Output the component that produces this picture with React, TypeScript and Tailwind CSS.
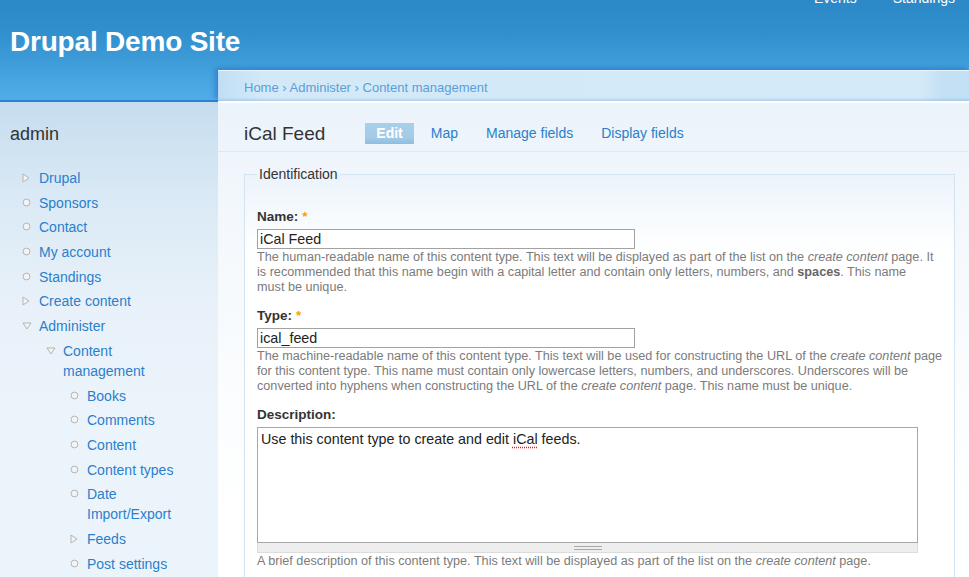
import React from "react";

type MenuItem = {
  label: string;
  kind: "leaf" | "collapsed" | "expanded";
  children?: MenuItem[];
};

const menu: MenuItem[] = [
  { label: "Drupal", kind: "collapsed" },
  { label: "Sponsors", kind: "leaf" },
  { label: "Contact", kind: "leaf" },
  { label: "My account", kind: "leaf" },
  { label: "Standings", kind: "leaf" },
  { label: "Create content", kind: "collapsed" },
  {
    label: "Administer",
    kind: "expanded",
    children: [
      {
        label: "Content management",
        kind: "expanded",
        children: [
          { label: "Books", kind: "leaf" },
          { label: "Comments", kind: "leaf" },
          { label: "Content", kind: "leaf" },
          { label: "Content types", kind: "leaf" },
          { label: "Date Import/Export", kind: "leaf" },
          { label: "Feeds", kind: "collapsed" },
          { label: "Post settings", kind: "leaf" },
        ],
      },
    ],
  },
];

const font = "font-['Liberation_Sans',Arial,sans-serif]";

function Bullet({ kind }: { kind: MenuItem["kind"] }) {
  if (kind === "leaf") {
    return (
      <svg width="9" height="9" viewBox="0 0 9 9" className="mt-[5px]">
        <circle cx="4.5" cy="4.5" r="3.4" fill="#f4f4f4" stroke="#b4b4b4" strokeWidth="1" />
      </svg>
    );
  }
  if (kind === "collapsed") {
    return (
      <svg width="8" height="10" viewBox="0 0 8 10" className="mt-[5px]">
        <path d="M1 1 L7 5 L1 9 Z" fill="#f4f4f4" stroke="#b4b4b4" strokeWidth="1" strokeLinejoin="round" />
      </svg>
    );
  }
  return (
    <svg width="10" height="8" viewBox="0 0 10 8" className="mt-[6px]">
      <path d="M1 1 L9 1 L5 7 Z" fill="#f4f4f4" stroke="#b4b4b4" strokeWidth="1" strokeLinejoin="round" />
    </svg>
  );
}

function MenuList({ items }: { items: MenuItem[] }) {
  return (
    <ul>
      {items.map((item) => (
        <li key={item.label}>
          <div className="flex pb-[4.7px]">
            <div className="w-[17px] shrink-0">
              <Bullet kind={item.kind} />
            </div>
            <a className="text-[14px] leading-[20px] text-[#2a7fcc]">{item.label}</a>
          </div>
          {item.children ? (
            <div className="ml-[24px]">
              <MenuList items={item.children} />
            </div>
          ) : null}
        </li>
      ))}
    </ul>
  );
}

function Sidebar() {
  return (
    <aside className="w-[218px] shrink-0 bg-[linear-gradient(to_bottom,#c6ddee_0px,#d9e9f5_90px,#e8f1f9_200px,#ecf4fb_320px,#ecf4fb_100%)] pl-[10px] pr-[36px] pt-[21px]">
      <h2 className="text-[18px] leading-[22px] text-[#333]">admin</h2>
      <nav className="ml-[12px] mt-[23px]">
        <MenuList items={menu} />
      </nav>
    </aside>
  );
}

function FormItem({
  label,
  required,
  children,
  help,
}: {
  label: string;
  required?: boolean;
  children: React.ReactNode;
  help: React.ReactNode;
}) {
  return (
    <div className="mb-[13px]">
      <label className="block text-[13.5px] font-bold leading-[16px] text-[#333]">
        {label}
        {required ? <span className="ml-[4px] text-[#f5a400]">*</span> : null}
      </label>
      <div className="mt-[4px]">{children}</div>
      <div className="mt-[1px] whitespace-nowrap text-[12.65px] leading-[15px] text-[#7b7b7b]">{help}</div>
    </div>
  );
}

function TextInput({ value }: { value: string }) {
  return (
    <div className="h-[20px] w-[378px] border border-[#a2a2a2] bg-white px-[2px] text-[14.3px] leading-[18px] text-[#222]">
      {value}
    </div>
  );
}

export default function App() {
  const tabs = ["Edit", "Map", "Manage fields", "Display fields"];

  return (
    <div className={`${font} h-[577px] w-[969px] overflow-hidden bg-white`}>
      <header className="flex h-[102px] flex-col border-b-2 border-[#2f82d3] bg-[linear-gradient(to_bottom,#2c88c7_0%,#3190cd_35%,#45a3df_75%,#52ade6_100%)]">
        <div className="-mt-[10px] flex h-[16px] justify-end gap-[36px] pr-[14px] text-[14px] leading-[16px] text-white">
          <a>Events</a>
          <a>Standings</a>
        </div>
        <h1 className="mt-[21px] pl-[10px] text-[28px] font-bold leading-[30px] tracking-[-0.2px] text-white">
          Drupal Demo Site
        </h1>
      </header>

      <div className="flex">
        <Sidebar />

        <main className="-mt-[32px] flex-1">
          <div className="h-[31px] border-t border-[#eaf5fd] bg-[linear-gradient(to_right,#c1def4_0px,#d3e9f8_45px,#d5eaf8_700px,#c3e0f5_725px,#c3e0f5_100%)] pl-[26px] text-[13px] leading-[33px] text-[#5a9edb] shadow-[-3px_-2px_5px_rgba(20,90,190,0.45),inset_0_-2px_2px_rgba(140,185,230,0.45)]">
            <a>Home</a> › <a>Administer</a> › <a>Content management</a>
          </div>
          <div className="h-[2px] bg-white" />

          <div className="h-[500px] bg-[linear-gradient(to_bottom,#ebf3fb_0px,#eef5fb_48px,#f4f8fc_120px,#fbfdfe_300px,#ffffff_420px)]">
            <div className="flex items-center border-b border-[#dfe9f1] pb-[7px] pl-[26px] pt-[20px]">
              <h2 className="mr-[40px] text-[19px] leading-[21px] text-[#333]">iCal Feed</h2>
              <ul className="flex gap-[6px]">
                {tabs.map((tab, i) =>
                  i === 0 ? (
                    <li
                      key={tab}
                      className="h-[21px] bg-[linear-gradient(to_bottom,#a9d0ea,#a3cbe7_70%,#8cbde0)] px-[11px] text-[14px] font-bold leading-[21px] text-white"
                    >
                      {tab}
                    </li>
                  ) : (
                    <li key={tab} className="h-[21px] px-[11px] text-[14px] leading-[21px] text-[#2a7fcc]">
                      {tab}
                    </li>
                  ),
                )}
              </ul>
            </div>

            <fieldset className="ml-[26px] mr-[15px] mt-[14px] border border-[#d2e4f2] bg-[linear-gradient(to_bottom,#ebf3fb_0px,#f6fafd_40px,#ffffff_80px)] px-[12px] pt-[27px]">
              <legend className="px-[2px] text-[14px] leading-[16px] text-[#333]">Identification</legend>

              <FormItem
                label="Name:"
                required
                help={
                  <>
                    The human-readable name of this content type. This text will be displayed as part of the list on
                    the <em>create content</em> page. It
                    <br />
                    is recommended that this name begin with a capital letter and contain only letters, numbers, and{" "}
                    <strong className="font-bold text-[#666]">spaces</strong>. This name
                    <br />
                    must be unique.
                  </>
                }
              >
                <TextInput value="iCal Feed" />
              </FormItem>

              <FormItem
                label="Type:"
                required
                help={
                  <>
                    The machine-readable name of this content type. This text will be used for constructing the URL of
                    the <em>create content</em> page
                    <br />
                    for this content type. This name must contain only lowercase letters, numbers, and underscores.
                    Underscores will be
                    <br />
                    converted into hyphens when constructing the URL of the <em>create content</em> page. This name
                    must be unique.
                  </>
                }
              >
                <TextInput value="ical_feed" />
              </FormItem>

              <FormItem
                label="Description:"
                help={
                  <>
                    A brief description of this content type. This text will be displayed as part of the list on the{" "}
                    <em>create content</em> page.
                  </>
                }
              >
                <div className="w-[661px]">
                  <div className="h-[116px] border border-[#a8a8a8] bg-white px-[3px] pt-[2px] text-[14.3px] leading-[18px] text-[#222]">
                    Use this content type to create and edit{" "}
                    <span className="underline decoration-[#d22] decoration-dotted underline-offset-[3px]">iCal</span>{" "}
                    feeds.
                  </div>
                  <div className="flex h-[10px] items-center justify-center border border-t-0 border-[#dcdcdc] bg-[#eeeeee]">
                    <div className="h-[4px] w-[28px] border-y border-[#a8a8a8]" />
                  </div>
                </div>
              </FormItem>
            </fieldset>
          </div>
        </main>
      </div>
    </div>
  );
}
